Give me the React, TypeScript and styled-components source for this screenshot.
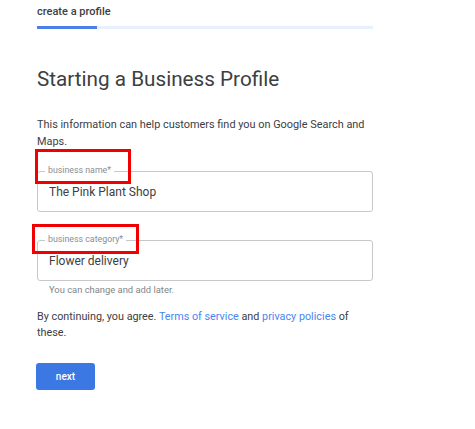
import React from "react";
import styled, { createGlobalStyle } from "styled-components";

const GlobalStyle = createGlobalStyle`
  html, body {
    margin: 0;
    padding: 0;
    background: #ffffff;
  }
  body {
    font-family: Roboto, "Liberation Sans", Arial, sans-serif;
    color: #3c4043;
  }
`;

const fields = [
  {
    label: "business name*",
    value: "The Pink Plant Shop",
    mark: { top: -23, left: -3, width: 96, height: 35 },
  },
  {
    label: "business category*",
    value: "Flower delivery",
    mark: { top: -17, left: -6, width: 107, height: 30 },
    hint: "You can change and add later.",
  },
];

export default function App() {
  return (
    <>
      <GlobalStyle />
      <Page>
        <Header>create a profile</Header>
        <Track>
          <TrackFill />
        </Track>
        <Title>Starting a Business Profile</Title>
        <Intro>
          This information can help customers find you on Google Search and
          Maps.
        </Intro>
        <Fields>
          {fields.map((f) => (
            <FieldGroup key={f.label}>
              <FieldBox>
                <FieldLabel>{f.label}</FieldLabel>
                <FieldValue>{f.value}</FieldValue>
                <Highlight
                  style={{
                    top: f.mark.top,
                    left: f.mark.left,
                    width: f.mark.width,
                    height: f.mark.height,
                  }}
                />
              </FieldBox>
              {f.hint && <Hint>{f.hint}</Hint>}
            </FieldGroup>
          ))}
        </Fields>
        <Terms>
          By continuing, you agree. <Link>Terms of service</Link> and{" "}
          <Link>privacy policies</Link> of these.
        </Terms>
        <NextButton>next</NextButton>
      </Page>
    </>
  );
}

const Page = styled.div`
  width: 336px;
  padding: 5px 0 0 37px;
  display: flex;
  flex-direction: column;
  align-items: flex-start;
`;

const Header = styled.div`
  font-size: 11px;
  font-weight: 500;
  line-height: 14px;
  color: #3c4043;
`;

const Track = styled.div`
  margin-top: 7px;
  width: 336px;
  height: 3px;
  background: #e8f0fe;
`;

const TrackFill = styled.div`
  width: 60px;
  height: 100%;
  background: #4a80e8;
`;

const Title = styled.h1`
  margin: 37px 0 0;
  font-size: 20.7px;
  font-weight: 400;
  line-height: 26px;
  color: #3c4043;
`;

const Intro = styled.p`
  margin: 24px 0 0;
  width: 336px;
  font-size: 10.9px;
  line-height: 17px;
  color: #3c4043;
`;

const Fields = styled.div`
  margin-top: 21px;
  display: flex;
  flex-direction: column;
  gap: 28px;
  width: 336px;
`;

const FieldGroup = styled.div`
  display: flex;
  flex-direction: column;
`;

const FieldBox = styled.div`
  position: relative;
  box-sizing: border-box;
  height: 41px;
  border: 1px solid #c6c8cb;
  border-radius: 3px;
  display: flex;
  align-items: center;
  padding: 0 11px;
`;

const FieldLabel = styled.span`
  position: absolute;
  top: -7px;
  left: 7px;
  padding: 0 3px;
  background: #ffffff;
  font-size: 8.8px;
  line-height: 11px;
  color: #8a8e93;
`;

const FieldValue = styled.span`
  font-size: 12px;
  color: #3c4043;
  margin-top: 1px;
`;

const Highlight = styled.div`
  position: absolute;
  box-sizing: border-box;
  border: 3px solid #f00000;
  pointer-events: none;
`;

const Hint = styled.div`
  margin: 3px 0 0 12px;
  font-size: 9.4px;
  line-height: 12px;
  color: #80868b;
`;

const Terms = styled.p`
  margin: 13px 0 0;
  width: 330px;
  font-size: 10.8px;
  line-height: 16px;
  color: #3c4043;
`;

const Link = styled.a`
  color: #4a86f0;
  text-decoration: none;
`;

const NextButton = styled.button`
  margin-top: 22px;
  margin-left: -1px;
  width: 59px;
  height: 27px;
  border: none;
  border-radius: 3px;
  background: #3c78e3;
  color: #ffffff;
  font-family: Roboto, "Liberation Sans", Arial, sans-serif;
  font-size: 10px;
  font-weight: 500;
`;
